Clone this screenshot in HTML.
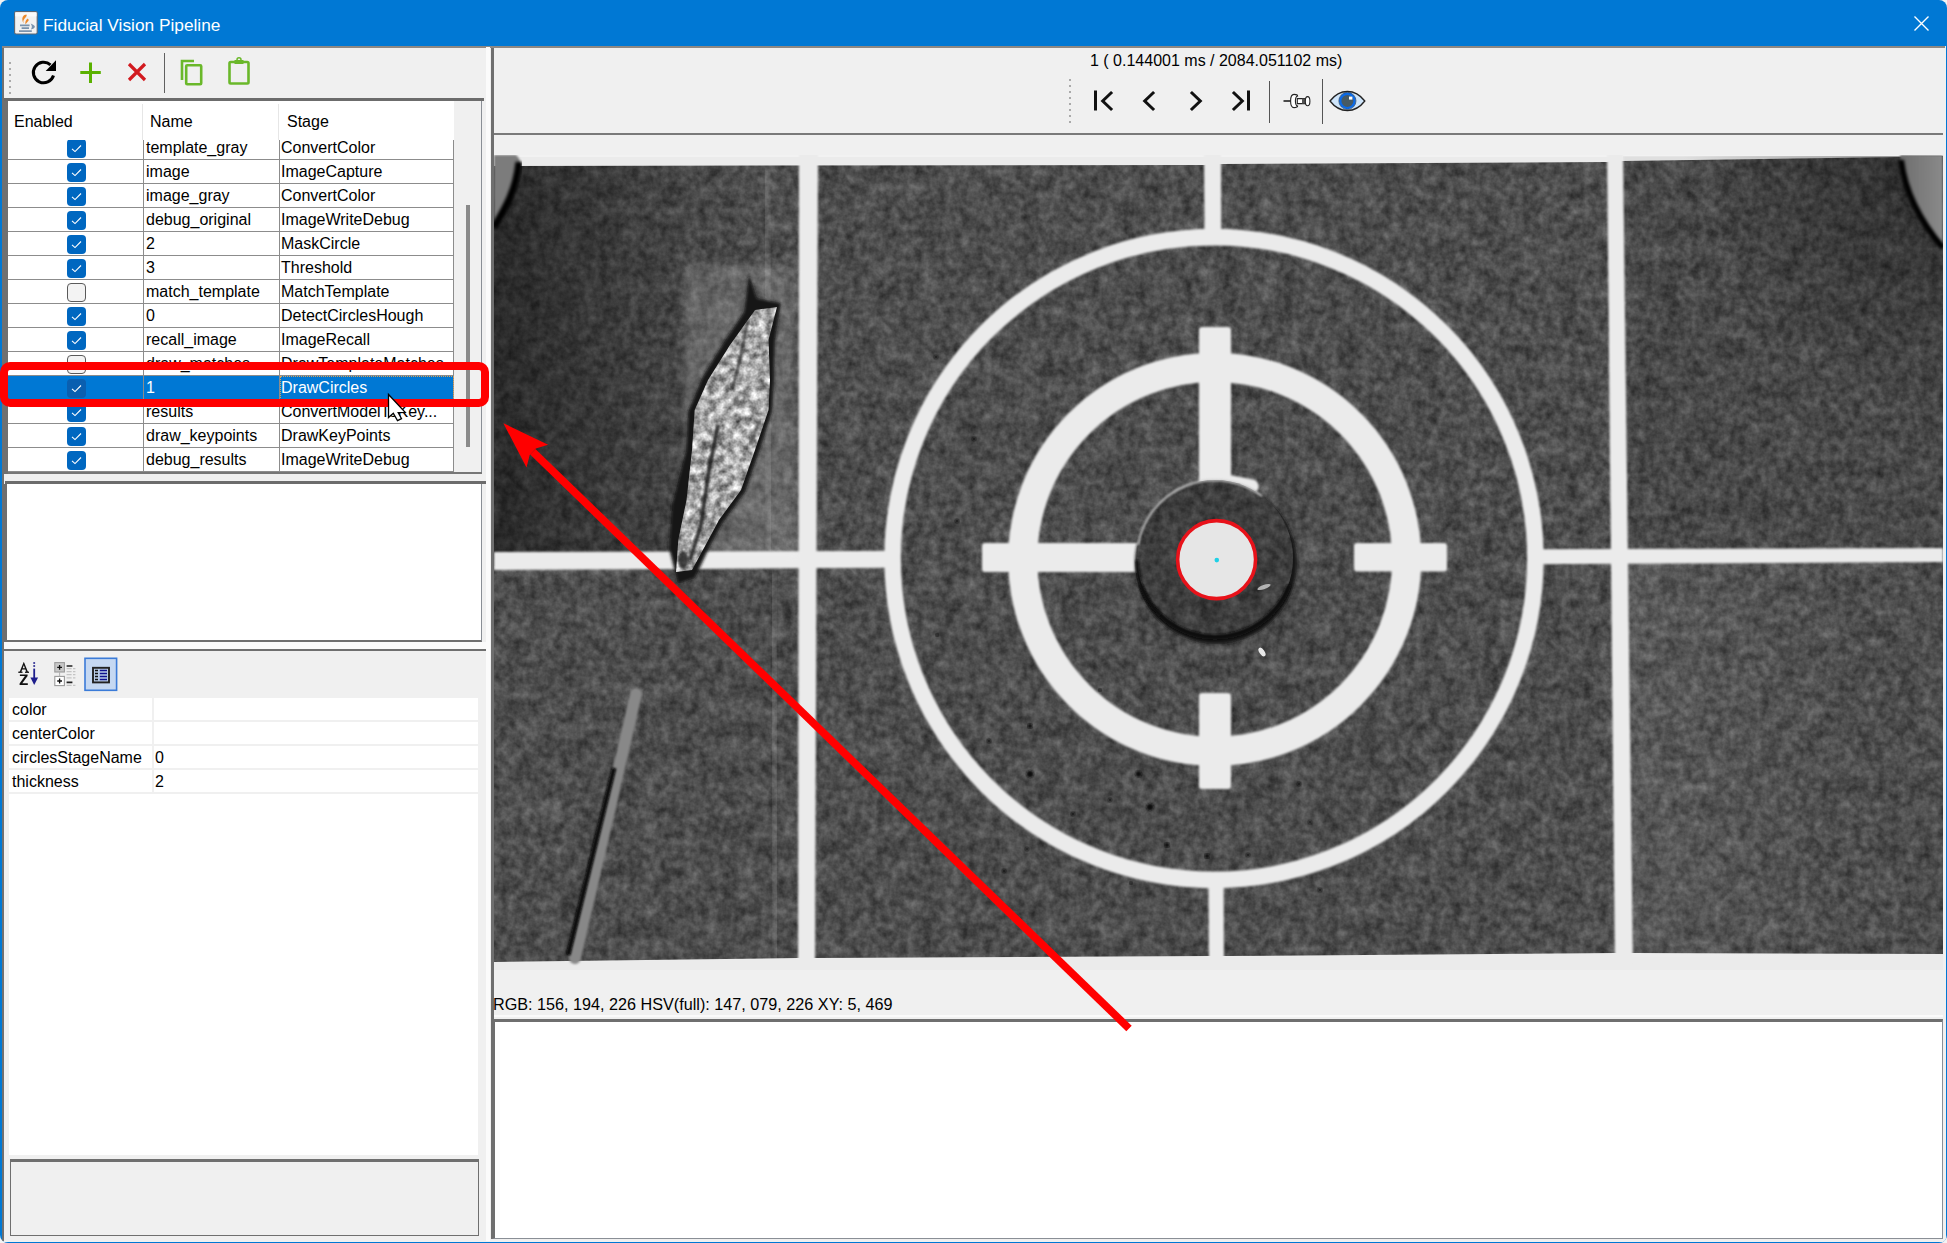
<!DOCTYPE html>
<html><head><meta charset="utf-8">
<style>
*{margin:0;padding:0;box-sizing:border-box}
html,body{width:1947px;height:1243px;overflow:hidden;background:#f3f3f3;font-family:"Liberation Sans",sans-serif}
.a{position:absolute}
#win{position:absolute;left:0;top:0;width:1947px;height:1243px;background:#0078d4;border-radius:8px 8px 8px 8px;overflow:hidden}
#title{position:absolute;left:43px;top:15px;color:#fff;font-size:17.3px;letter-spacing:0px}
.t{position:absolute;font-size:16px;color:#000;white-space:nowrap;line-height:20px}
.row{position:absolute;left:8px;width:446px;height:24px;border-bottom:1px solid #8a8a8a;background:#fff}
.cb{position:absolute;left:67px;width:19px;height:19px;border-radius:4px;background:#0067c0}
.cbo{position:absolute;left:67px;width:19px;height:19px;border-radius:4px;background:#f4f4f4;border:1px solid #555}
.vl{position:absolute;width:1px;background:#8a8a8a}
.prow{position:absolute;left:9px;width:469px;height:24px;background:#fff;border-bottom:2px solid #f0f0f0}
</style></head><body>
<div id="win">
  <!-- title bar -->
  <svg class="a" style="left:10px;top:8px" width="32" height="30" viewBox="10 8 32 30">
    <rect x="14.6" y="11.6" width="22.6" height="22.4" rx="1.5" fill="#f2f2f2" stroke="#5f6670" stroke-width="1.1"/>
    <rect x="15.3" y="12.3" width="21.2" height="4" fill="#fafafa"/>
    <path d="M24.5 15C21.5 17 22 20 23.5 23.5C22.8 20.5 24 19 25.5 17.5C26.5 16.5 27 15.5 26.5 14.5Z" fill="#ec8a2c"/>
    <path d="M27.8 18.5C25.5 20 25 22 25.5 24.5C26.5 22.5 28.5 21.5 28.8 20Z" fill="#ec8a2c"/>
    <path d="M20 25.4H29.6M21.6 28.1H29M19 31.2H31.8" stroke="#7a93ad" stroke-width="1.7"/>
    <path d="M30.7 23.6Q35.5 25.6 34.8 27.3Q33.8 29 30.8 29.4Q33 27 30.7 23.6Z" fill="#7a93ad"/>
  </svg>
  <div id="title">Fiducial Vision Pipeline</div>
  <svg class="a" style="left:1913px;top:15px" width="17" height="17" viewBox="0 0 17 17"><path d="M1.5 1.5L15.5 15.5M15.5 1.5L1.5 15.5" stroke="#fff" stroke-width="1.4"/></svg>

  <!-- client -->
  <div class="a" style="left:2px;top:46px;width:1944px;height:1195.5px;background:#f0f0f0"></div>
  <div class="a" style="left:2px;top:46px;width:1943px;height:2px;background:#8d8884"></div>

  <!-- ===== LEFT PANEL ===== -->
  <div class="a" style="left:2px;top:48px;width:2px;height:1193px;background:#707070"></div>
  <!-- toolbar -->
  <div class="a" style="left:4px;top:48px;width:484px;height:50px;background:#f0f0f0"></div>
  <div class="a" style="left:9px;top:62px;width:2px;height:36px;background:repeating-linear-gradient(#aaa 0 2px,transparent 2px 6px)"></div>
  <svg class="a" style="left:28px;top:56px" width="32" height="32" viewBox="0 0 32 32">
    <path d="M25.5 19.5A10.3 10.3 0 1 1 22.5 8.8" stroke="#000" stroke-width="3" fill="none"/>
    <path d="M28 4.3L28 15L17.7 15Z" fill="#000"/>
  </svg>
  <svg class="a" style="left:78px;top:60px" width="26" height="26" viewBox="0 0 26 26">
    <path d="M12.5 2.5V23M2.3 12.5H22.8" stroke="#5ab100" stroke-width="3"/>
  </svg>
  <svg class="a" style="left:126px;top:61px" width="22" height="22" viewBox="0 0 22 22">
    <path d="M3 3L19 19M19 3L3 19" stroke="#d21a1f" stroke-width="3.2"/>
  </svg>
  <div class="a" style="left:164px;top:53px;width:1px;height:40px;background:#606060"></div>
  <svg class="a" style="left:178px;top:57px" width="28" height="30" viewBox="0 0 28 30">
    <path d="M4 23V4H16" stroke="#6ab82a" stroke-width="2.6" fill="none"/>
    <rect x="8.2" y="8.2" width="15" height="19" rx="1" stroke="#6ab82a" stroke-width="2.6" fill="none"/>
  </svg>
  <svg class="a" style="left:226px;top:56px" width="26" height="30" viewBox="0 0 26 30">
    <rect x="3.5" y="6" width="19" height="21.5" rx="1.2" stroke="#6ab82a" stroke-width="2.6" fill="none"/>
    <rect x="8.5" y="4" width="9" height="4" fill="#6ab82a"/>
    <circle cx="13" cy="3.8" r="2" stroke="#6ab82a" stroke-width="1.5" fill="none"/>
  </svg>
  <div class="a" style="left:4px;top:98px;width:480px;height:3px;background:#6c6c6c"></div>

  <!-- table area -->
  <div class="a" style="left:4px;top:101px;width:478px;height:373px;background:#f0f0f0;border-left:4px solid #707070"></div>
  <div class="a" style="left:8px;top:101px;width:446px;height:39px;background:#fff"></div>
  <div class="a" style="left:142px;top:104px;width:1px;height:36px;background:#e6e6e6"></div>
  <div class="a" style="left:278px;top:104px;width:1px;height:36px;background:#e6e6e6"></div>
  <div class="t" style="left:14px;top:112px">Enabled</div>
  <div class="t" style="left:150px;top:112px">Name</div>
  <div class="t" style="left:287px;top:112px">Stage</div>
  <div class="a" style="left:8px;top:140px;width:446px;height:333px;overflow:hidden">
<div class="a" style="left:0;top:-4px;width:446px;height:24px;background:#fff"></div>
<div class="a" style="left:0;top:19px;width:446px;height:1px;background:#8c8c8c"></div>
<div class="a" style="left:59px;top:-1px;width:19px;height:19px;border-radius:4px;background:#0067c0"></div>
<svg class="a" style="left:59px;top:-1px" width="19" height="19" viewBox="0 0 19 19"><path d="M5 9.8L8 12.6L14 6.5" stroke="#fff" stroke-width="1.1" fill="none"/></svg>
<div class="t" style="left:138px;top:-2px;color:#000">template_gray</div>
<div class="t" style="left:273px;top:-2px;color:#000">ConvertColor</div>
<div class="a" style="left:0;top:20px;width:446px;height:24px;background:#fff"></div>
<div class="a" style="left:0;top:43px;width:446px;height:1px;background:#8c8c8c"></div>
<div class="a" style="left:59px;top:23px;width:19px;height:19px;border-radius:4px;background:#0067c0"></div>
<svg class="a" style="left:59px;top:23px" width="19" height="19" viewBox="0 0 19 19"><path d="M5 9.8L8 12.6L14 6.5" stroke="#fff" stroke-width="1.1" fill="none"/></svg>
<div class="t" style="left:138px;top:22px;color:#000">image</div>
<div class="t" style="left:273px;top:22px;color:#000">ImageCapture</div>
<div class="a" style="left:0;top:44px;width:446px;height:24px;background:#fff"></div>
<div class="a" style="left:0;top:67px;width:446px;height:1px;background:#8c8c8c"></div>
<div class="a" style="left:59px;top:47px;width:19px;height:19px;border-radius:4px;background:#0067c0"></div>
<svg class="a" style="left:59px;top:47px" width="19" height="19" viewBox="0 0 19 19"><path d="M5 9.8L8 12.6L14 6.5" stroke="#fff" stroke-width="1.1" fill="none"/></svg>
<div class="t" style="left:138px;top:46px;color:#000">image_gray</div>
<div class="t" style="left:273px;top:46px;color:#000">ConvertColor</div>
<div class="a" style="left:0;top:68px;width:446px;height:24px;background:#fff"></div>
<div class="a" style="left:0;top:91px;width:446px;height:1px;background:#8c8c8c"></div>
<div class="a" style="left:59px;top:71px;width:19px;height:19px;border-radius:4px;background:#0067c0"></div>
<svg class="a" style="left:59px;top:71px" width="19" height="19" viewBox="0 0 19 19"><path d="M5 9.8L8 12.6L14 6.5" stroke="#fff" stroke-width="1.1" fill="none"/></svg>
<div class="t" style="left:138px;top:70px;color:#000">debug_original</div>
<div class="t" style="left:273px;top:70px;color:#000">ImageWriteDebug</div>
<div class="a" style="left:0;top:92px;width:446px;height:24px;background:#fff"></div>
<div class="a" style="left:0;top:115px;width:446px;height:1px;background:#8c8c8c"></div>
<div class="a" style="left:59px;top:95px;width:19px;height:19px;border-radius:4px;background:#0067c0"></div>
<svg class="a" style="left:59px;top:95px" width="19" height="19" viewBox="0 0 19 19"><path d="M5 9.8L8 12.6L14 6.5" stroke="#fff" stroke-width="1.1" fill="none"/></svg>
<div class="t" style="left:138px;top:94px;color:#000">2</div>
<div class="t" style="left:273px;top:94px;color:#000">MaskCircle</div>
<div class="a" style="left:0;top:116px;width:446px;height:24px;background:#fff"></div>
<div class="a" style="left:0;top:139px;width:446px;height:1px;background:#8c8c8c"></div>
<div class="a" style="left:59px;top:119px;width:19px;height:19px;border-radius:4px;background:#0067c0"></div>
<svg class="a" style="left:59px;top:119px" width="19" height="19" viewBox="0 0 19 19"><path d="M5 9.8L8 12.6L14 6.5" stroke="#fff" stroke-width="1.1" fill="none"/></svg>
<div class="t" style="left:138px;top:118px;color:#000">3</div>
<div class="t" style="left:273px;top:118px;color:#000">Threshold</div>
<div class="a" style="left:0;top:140px;width:446px;height:24px;background:#fff"></div>
<div class="a" style="left:0;top:163px;width:446px;height:1px;background:#8c8c8c"></div>
<div class="a" style="left:59px;top:143px;width:19px;height:19px;border-radius:4px;background:#f3f3f3;border:1px solid #5a5a5a"></div>
<div class="t" style="left:138px;top:142px;color:#000">match_template</div>
<div class="t" style="left:273px;top:142px;color:#000">MatchTemplate</div>
<div class="a" style="left:0;top:164px;width:446px;height:24px;background:#fff"></div>
<div class="a" style="left:0;top:187px;width:446px;height:1px;background:#8c8c8c"></div>
<div class="a" style="left:59px;top:167px;width:19px;height:19px;border-radius:4px;background:#0067c0"></div>
<svg class="a" style="left:59px;top:167px" width="19" height="19" viewBox="0 0 19 19"><path d="M5 9.8L8 12.6L14 6.5" stroke="#fff" stroke-width="1.1" fill="none"/></svg>
<div class="t" style="left:138px;top:166px;color:#000">0</div>
<div class="t" style="left:273px;top:166px;color:#000">DetectCirclesHough</div>
<div class="a" style="left:0;top:188px;width:446px;height:24px;background:#fff"></div>
<div class="a" style="left:0;top:211px;width:446px;height:1px;background:#8c8c8c"></div>
<div class="a" style="left:59px;top:191px;width:19px;height:19px;border-radius:4px;background:#0067c0"></div>
<svg class="a" style="left:59px;top:191px" width="19" height="19" viewBox="0 0 19 19"><path d="M5 9.8L8 12.6L14 6.5" stroke="#fff" stroke-width="1.1" fill="none"/></svg>
<div class="t" style="left:138px;top:190px;color:#000">recall_image</div>
<div class="t" style="left:273px;top:190px;color:#000">ImageRecall</div>
<div class="a" style="left:0;top:212px;width:446px;height:24px;background:#fff"></div>
<div class="a" style="left:0;top:235px;width:446px;height:1px;background:#8c8c8c"></div>
<div class="a" style="left:59px;top:215px;width:19px;height:19px;border-radius:4px;background:#f3f3f3;border:1px solid #5a5a5a"></div>
<div class="t" style="left:138px;top:214px;color:#000">draw_matches</div>
<div class="t" style="left:273px;top:214px;color:#000">DrawTemplateMatches</div>
<div class="a" style="left:0;top:236px;width:446px;height:24px;background:#0078d4"></div>
<div class="a" style="left:0;top:259px;width:446px;height:1px;background:#8c8c8c"></div>
<div class="a" style="left:59px;top:239px;width:19px;height:19px;border-radius:4px;background:#0a5fb0"></div>
<svg class="a" style="left:59px;top:239px" width="19" height="19" viewBox="0 0 19 19"><path d="M5 9.8L8 12.6L14 6.5" stroke="#fff" stroke-width="1.1" fill="none"/></svg>
<div class="t" style="left:138px;top:238px;color:#fff">1</div>
<div class="t" style="left:273px;top:238px;color:#fff">DrawCircles</div>
<div class="a" style="left:0;top:260px;width:446px;height:24px;background:#fff"></div>
<div class="a" style="left:0;top:283px;width:446px;height:1px;background:#8c8c8c"></div>
<div class="a" style="left:59px;top:263px;width:19px;height:19px;border-radius:4px;background:#0067c0"></div>
<svg class="a" style="left:59px;top:263px" width="19" height="19" viewBox="0 0 19 19"><path d="M5 9.8L8 12.6L14 6.5" stroke="#fff" stroke-width="1.1" fill="none"/></svg>
<div class="t" style="left:138px;top:262px;color:#000">results</div>
<div class="t" style="left:273px;top:262px;color:#000">ConvertModelToKey...</div>
<div class="a" style="left:0;top:284px;width:446px;height:24px;background:#fff"></div>
<div class="a" style="left:0;top:307px;width:446px;height:1px;background:#8c8c8c"></div>
<div class="a" style="left:59px;top:287px;width:19px;height:19px;border-radius:4px;background:#0067c0"></div>
<svg class="a" style="left:59px;top:287px" width="19" height="19" viewBox="0 0 19 19"><path d="M5 9.8L8 12.6L14 6.5" stroke="#fff" stroke-width="1.1" fill="none"/></svg>
<div class="t" style="left:138px;top:286px;color:#000">draw_keypoints</div>
<div class="t" style="left:273px;top:286px;color:#000">DrawKeyPoints</div>
<div class="a" style="left:0;top:308px;width:446px;height:24px;background:#fff"></div>
<div class="a" style="left:0;top:331px;width:446px;height:1px;background:#8c8c8c"></div>
<div class="a" style="left:59px;top:311px;width:19px;height:19px;border-radius:4px;background:#0067c0"></div>
<svg class="a" style="left:59px;top:311px" width="19" height="19" viewBox="0 0 19 19"><path d="M5 9.8L8 12.6L14 6.5" stroke="#fff" stroke-width="1.1" fill="none"/></svg>
<div class="t" style="left:138px;top:310px;color:#000">debug_results</div>
<div class="t" style="left:273px;top:310px;color:#000">ImageWriteDebug</div>
<div class="a" style="left:135px;top:0;width:1px;height:333px;background:#8c8c8c"></div>
<div class="a" style="left:271px;top:0;width:1px;height:333px;background:#8c8c8c"></div>
<div class="a" style="left:445px;top:0;width:1.5px;height:333px;background:#8c8c8c"></div>
</div>
  <div class="a" style="left:481px;top:101px;width:1px;height:373px;background:#8a8f96"></div>
  <div class="a" style="left:8px;top:472px;width:474px;height:2px;background:#777"></div>
  <div class="a" style="left:466px;top:205px;width:4px;height:242px;background:#8a8a8a"></div>

  <!-- blank white box -->
  <div class="a" style="left:5px;top:481px;width:481px;height:2.5px;background:#6c6c6c"></div>
  <div class="a" style="left:3px;top:483.5px;width:479px;height:158.5px;background:#fff;border-left:4.5px solid #6f6f6f;border-bottom:2px solid #6f6f6f;border-right:1px solid #8a8f96"></div>
  <div class="a" style="left:4px;top:642px;width:482px;height:7px;background:#fafafa"></div>

  <!-- properties panel -->
  <div class="a" style="left:3px;top:649px;width:483px;height:2px;background:#6f6f6f"></div>
  <svg class="a" style="left:8px;top:650px" width="120" height="50" viewBox="8 650 120 50">
    <g fill="#111">
      <path d="M23.7 662L19.6 672H21.3L22.2 669.6H25.4L26.3 672H28L23.9 662ZM22.7 668.3L23.8 665.2L24.9 668.3Z"/>
      <rect x="18.3" y="671.6" width="4.2" height="1.3"/><rect x="25" y="671.6" width="4" height="1.3"/>
      <path d="M19.9 674.4H27.6V675.9L22.3 683.3H27.8V684.9H19.6V683.4L24.9 676H19.9Z"/>
    </g>
    <g fill="#1e1e8c">
      <rect x="33.3" y="662.2" width="1.8" height="1.6"/><rect x="33.3" y="665.2" width="1.8" height="1.6"/>
      <rect x="33.3" y="668.6" width="1.8" height="9.5"/>
      <path d="M30.4 677.5H38.1L34.2 685Z"/>
    </g>
    <rect x="54.8" y="662.6" width="9.6" height="9.4" fill="#c8c8c8" stroke="#9a9a9a" stroke-width="1.1"/>
    <rect x="54.8" y="676.4" width="9.6" height="9.2" fill="#fff" stroke="#9a9a9a" stroke-width="1.1"/>
    <path d="M59.6 672V676.4" stroke="#b0b0b0"/>
    <path d="M57.2 667.3H62M59.6 664.9V669.7M57.2 681H62M59.6 678.6V683.4" stroke="#111" stroke-width="1.3"/>
    <path d="M66.6 666H72.4M66.6 682.4H72.4" stroke="#222" stroke-width="1.6"/>
    <path d="M66.6 668.6H71.6M73 668.6H75.4M66.6 671.6H71.6M73 671.6H75.4M66.6 674.7H71.6M73 674.7H75.4M66.6 677.8H71.6M73 677.8H75.4M66.6 685.4H71.6M73 685.4H75.4" stroke="#c4c4c4" stroke-width="1.2"/>
    <rect x="85" y="658.3" width="31.6" height="32" fill="#c5d8f2" stroke="#3b7bd8" stroke-width="1.6"/>
    <rect x="93" y="667.8" width="16" height="14.6" fill="#b9cde8" stroke="#222" stroke-width="1.9"/>
    <path d="M95 670.5H98M95 673.5H98M95 676.5H98M95 679.5H98" stroke="#111" stroke-width="1.3"/>
    <path d="M99.8 670.5H107M99.8 673.5H107M99.8 676.5H107M99.8 679.5H107" stroke="#10108e" stroke-width="1.3"/>
  </svg>
  <div class="a" style="left:9px;top:698px;width:469px;height:22px;background:#fff"></div>
<div class="a" style="left:152px;top:698px;width:2px;height:22px;background:#f0f0f0"></div>
<div class="t" style="left:12px;top:699.5px">color</div>
<div class="a" style="left:9px;top:722px;width:469px;height:22px;background:#fff"></div>
<div class="a" style="left:152px;top:722px;width:2px;height:22px;background:#f0f0f0"></div>
<div class="t" style="left:12px;top:723.5px">centerColor</div>
<div class="a" style="left:9px;top:746px;width:469px;height:22px;background:#fff"></div>
<div class="a" style="left:152px;top:746px;width:2px;height:22px;background:#f0f0f0"></div>
<div class="t" style="left:12px;top:747.5px">circlesStageName</div>
<div class="t" style="left:155px;top:747.5px">0</div>
<div class="a" style="left:9px;top:770px;width:469px;height:22px;background:#fff"></div>
<div class="a" style="left:152px;top:770px;width:2px;height:22px;background:#f0f0f0"></div>
<div class="t" style="left:12px;top:771.5px">thickness</div>
<div class="t" style="left:155px;top:771.5px">2</div>
  <div class="a" style="left:9px;top:794px;width:469px;height:361px;background:#fff"></div>

  <!-- bottom box -->
  <div class="a" style="left:10px;top:1159px;width:469px;height:77px;background:#f0f0f0;border:1px solid #6f6f6f;border-top:3px solid #6f6f6f"></div>

  <!-- splitter / right panel borders -->
  <div class="a" style="left:486px;top:47px;width:4px;height:1194px;background:#fbfbfb"></div>
  <div class="a" style="left:491px;top:48px;width:3px;height:1191px;background:#6f6f6f"></div>

  <!-- ===== RIGHT PANEL ===== -->
  <div class="t" style="left:1090px;top:50.5px">1 ( 0.144001 ms / 2084.051102 ms)</div>
  <div class="a" style="left:1069px;top:79px;width:2px;height:44px;background:repeating-linear-gradient(#aaa 0 2px,transparent 2px 6px)"></div>
  <svg class="a" style="left:1090px;top:88px" width="170" height="26" viewBox="0 0 170 26">
    <g stroke="#111" stroke-width="3" fill="none" stroke-linecap="square">
      <path d="M5.5 4V21"/>
      <path d="M21 5L12.7 13L21 21"/>
      <path d="M63 5L54.7 13L63 21"/>
      <path d="M102 5L110.3 13L102 21"/>
      <path d="M144 5L152.3 13L144 21"/>
      <path d="M158.5 4V21"/>
    </g>
  </svg>
  <div class="a" style="left:1269px;top:81px;width:1px;height:42px;background:#555"></div>
  <svg class="a" style="left:1275px;top:78px" width="100" height="47" viewBox="1275 78 100 47">
    <path d="M1283.5 101H1291" stroke="#222" stroke-width="1.6"/>
    <path d="M1297.3 98.6H1305.6V103.6H1297.3Z" fill="#fff" stroke="#222" stroke-width="1.1"/>
    <path d="M1302 98.6H1305.6V103.6H1302Z" fill="#555"/>
    <ellipse cx="1307.6" cy="101.2" rx="2.3" ry="4.6" fill="#fff" stroke="#222" stroke-width="1.1"/>
    <path d="M1294 94.4C1291.2 94.4 1290.6 97.5 1290.6 101C1290.6 104.5 1291.2 107.6 1294 107.6C1296.4 107.6 1297.6 106.4 1297.6 106C1295.8 105.6 1295.4 103.6 1295.4 101C1295.4 98.4 1295.8 96.4 1297.6 96C1297.6 95.6 1296.4 94.4 1294 94.4Z" fill="#fff" stroke="#222" stroke-width="1.1"/>
    <path d="M1330 101C1335 94.5 1341 91.5 1347.4 91.5C1353.8 91.5 1359.8 94.5 1364.8 101C1359.8 107.5 1353.8 110.5 1347.4 110.5C1341 110.5 1335 107.5 1330 101Z" fill="#cfe5fa" stroke="#222" stroke-width="1.3"/>
    <circle cx="1347.4" cy="100.9" r="7.2" fill="#465a64" stroke="#0a6ae8" stroke-width="2.4"/>
    <circle cx="1347.4" cy="100.9" r="8.6" fill="none" stroke="#1a2a3a" stroke-width="0.8" opacity="0.7"/>
    <rect x="1349" y="96.6" width="3.4" height="3" fill="#fff"/>
  </svg>
  <div class="a" style="left:1322px;top:79px;width:1px;height:45px;background:#555"></div>
  <div class="a" style="left:494px;top:133px;width:1449px;height:2px;background:#7a7a7a"></div>

  <!-- image -->
  <svg class="a" style="left:494px;top:155px" width="1449" height="815" viewBox="494 155 1449 815">
<defs>
<filter id="nz" x="494" y="155" width="1449" height="815" filterUnits="userSpaceOnUse" color-interpolation-filters="sRGB">
  <feTurbulence type="fractalNoise" baseFrequency="0.13" numOctaves="3" seed="3" result="t1"/>
  <feColorMatrix in="t1" type="matrix" values="1 0 0 0 0  1 0 0 0 0  1 0 0 0 0  0 0 0 0 1" result="g1"/>
  <feTurbulence type="fractalNoise" baseFrequency="0.05" numOctaves="2" seed="11" result="t2"/>
  <feColorMatrix in="t2" type="matrix" values="1 0 0 0 0  1 0 0 0 0  1 0 0 0 0  0 0 0 0 1" result="g2"/>
  <feComposite in="g1" in2="g2" operator="arithmetic" k1="0" k2="0.27" k3="0.17" k4="0.085" result="g0"/>
  <feColorMatrix in="g0" type="matrix" values="0.525 0 0 0 0  0.525 0 0 0 0  0.525 0 0 0 0  0 0 0 0 1" result="g"/>
  <feGaussianBlur in="g" stdDeviation="0.5" result="gb"/>
  <feComposite in="gb" in2="SourceAlpha" operator="in"/>
</filter>
<filter id="nzl" x="640" y="250" width="170" height="350" filterUnits="userSpaceOnUse" color-interpolation-filters="sRGB">
  <feTurbulence type="fractalNoise" baseFrequency="0.12" numOctaves="3" seed="5" result="t1"/>
  <feColorMatrix in="t1" type="matrix" values="1.0 0 0 0 0.16  1.0 0 0 0 0.16  1.0 0 0 0 0.16  0 0 0 0 1" result="g1"/>
  <feComposite in="g1" in2="SourceAlpha" operator="in"/>
  <feGaussianBlur stdDeviation="0.7"/>
</filter>
<filter id="bl1"><feGaussianBlur stdDeviation="0.8"/></filter>
<filter id="bl2"><feGaussianBlur stdDeviation="1.6"/></filter>
<filter id="bl3"><feGaussianBlur stdDeviation="3"/></filter>
<filter id="bl8" x="-50%" y="-50%" width="200%" height="200%"><feGaussianBlur stdDeviation="25"/></filter>
<linearGradient id="vigL" x1="0" y1="0" x2="1" y2="0">
  <stop offset="0" stop-color="#000" stop-opacity="0.35"/>
  <stop offset="1" stop-color="#000" stop-opacity="0"/>
</linearGradient>
</defs>
<rect x="494" y="155" width="1449" height="815" fill="#ebebeb"/>
<rect x="494" y="155" width="1449" height="2" fill="#f2f2f2"/>
<g filter="url(#nz)">
<polygon points="494,166 1204,165 1221,164 1607,162 1623,161 1900,157 1943,156 1943,954 1633,953 1615,953 1224,956 1209,956 815,958 798,958 494,962" fill="#000"/>
</g>
<rect x="494" y="166" width="260" height="400" fill="url(#vigL)"/>
<rect x="494" y="166" width="200" height="386" fill="url(#vigL)" opacity="0.5"/>
<defs><linearGradient id="ltR" x1="0" y1="0" x2="1" y2="0"><stop offset="0" stop-color="#fff" stop-opacity="0.07"/><stop offset="1" stop-color="#fff" stop-opacity="0"/></linearGradient></defs>
<rect x="1625" y="562" width="240" height="395" fill="url(#ltR)"/>
<rect x="1623" y="156" width="320" height="394" fill="#000" opacity="0.05"/>
<defs><radialGradient id="vigTR" cx="1943" cy="156" r="260" gradientUnits="userSpaceOnUse"><stop offset="0" stop-color="#000" stop-opacity="0.4"/><stop offset="1" stop-color="#000" stop-opacity="0"/></radialGradient></defs>
<rect x="1623" y="156" width="320" height="394" fill="url(#vigTR)"/>
<rect x="685" y="268" width="105" height="290" fill="#fff" opacity="0.06" filter="url(#bl3)"/>
<path d="M766 170 L770 552" stroke="#fff" stroke-width="7" opacity="0.10" filter="url(#bl2)"/>
<g filter="url(#bl1)"><polygon points="799,150 818,150 815,975 798,975" fill="#ebebeb"/><polygon points="1204,150 1221,150 1224,975 1209,975" fill="#ebebeb"/><polygon points="1607,150 1623,150 1633,975 1615,975" fill="#ebebeb"/><polygon points="494,552 1943,548 1943,562 494,570" fill="#ebebeb"/></g>
<g filter="url(#nz)">
<circle cx="1214" cy="558.5" r="322" fill="#000"/>
</g>
<g filter="url(#bl1)"><circle cx="1214" cy="558.5" r="321.4" fill="none" stroke="#ebebeb" stroke-width="16.6"/><circle cx="1214.7" cy="559.3" r="192" fill="none" stroke="#ebebeb" stroke-width="29.3"/><rect x="1199" y="327" width="32" height="170" rx="3" fill="#ebebeb"/><path d="M1225 474 L1255 480 Q1262 486 1256 492 L1225 492Z" fill="#ebebeb"/><rect x="982" y="543" width="170" height="29" rx="3" fill="#ebebeb"/><rect x="1354" y="543" width="93" height="28.5" rx="3" fill="#ebebeb"/><rect x="1199" y="693" width="32" height="96" rx="3" fill="#ebebeb"/></g>
<circle cx="1216" cy="563" r="81" fill="#151515" filter="url(#bl2)"/>
<g filter="url(#nz)">
<circle cx="1215" cy="558" r="78" fill="#000"/>
</g>
<circle cx="1215" cy="558" r="78" fill="#000" opacity="0.2"/>
<path d="M1138 545 A78 78 0 0 1 1262 496" fill="none" stroke="#d0d0d0" stroke-width="2.2" opacity="0.85" filter="url(#bl1)"/>
<path d="M1140.8 585 A79 79 0 0 0 1289.2 585" fill="none" stroke="#111" stroke-width="5" opacity="0.95" filter="url(#bl1)"/>
<path d="M1137 560 A79 79 0 0 0 1160 615" fill="none" stroke="#111" stroke-width="3" opacity="0.9" filter="url(#bl1)"/>
<circle cx="1216.6" cy="559.6" r="39" fill="#e6e6e6" stroke="#e8121a" stroke-width="3.6"/>
<circle cx="1216.8" cy="560.1" r="2.3" fill="#1fd0e6"/>
<ellipse cx="1262" cy="652" rx="2.5" ry="5" transform="rotate(-35 1262 652)" fill="#e8e8e8"/>
<ellipse cx="1264" cy="587" rx="7" ry="2" transform="rotate(-20 1264 587)" fill="#cfcfcf" opacity="0.8"/>
<circle cx="1030" cy="774" r="3.5" fill="#111" filter="url(#bl1)"/>
<circle cx="1138.5" cy="774" r="3" fill="#111" filter="url(#bl1)"/>
<circle cx="1150" cy="807" r="3.5" fill="#111" filter="url(#bl1)"/>
<circle cx="1073" cy="814" r="2" fill="#111" filter="url(#bl1)"/>
<circle cx="1110" cy="800" r="2" fill="#111" filter="url(#bl1)"/>
<circle cx="1167" cy="845" r="2.5" fill="#111" filter="url(#bl1)"/>
<circle cx="1207" cy="856" r="2.5" fill="#111" filter="url(#bl1)"/>
<circle cx="1030" cy="726" r="2.5" fill="#111" filter="url(#bl1)"/>
<circle cx="989" cy="741" r="2" fill="#111" filter="url(#bl1)"/>
<circle cx="1004" cy="871" r="2" fill="#111" filter="url(#bl1)"/>
<circle cx="1027" cy="849" r="1.8" fill="#111" filter="url(#bl1)"/>
<circle cx="937" cy="635" r="1.5" fill="#111" filter="url(#bl1)"/>
<circle cx="1131" cy="883" r="1.5" fill="#111" filter="url(#bl1)"/>
<circle cx="974" cy="439" r="2" fill="#111" filter="url(#bl1)"/>
<circle cx="957" cy="521" r="2" fill="#111" filter="url(#bl1)"/>
<circle cx="1299" cy="784" r="2" fill="#111" filter="url(#bl1)"/>
<circle cx="1248" cy="855" r="2" fill="#111" filter="url(#bl1)"/>
<circle cx="936" cy="357" r="2" fill="#111" filter="url(#bl1)"/>
<circle cx="1310" cy="822" r="1.8" fill="#111" filter="url(#bl1)"/>
<circle cx="1100" cy="690" r="1.5" fill="#111" filter="url(#bl1)"/>
<circle cx="1320" cy="890" r="2" fill="#111" filter="url(#bl1)"/>
<rect x="684" y="266" width="114" height="292" rx="6" fill="#fff" opacity="0.10" filter="url(#bl3)"/>
<polygon points="749,274 757,298 781,303 775,340 774,380 772,412 759,452 745,492 722,524 709,548 695,578 678,584 669,548 672,505 686,450 688,412 702,378 724,342 744,312" fill="#121212" filter="url(#bl2)"/>
<g filter="url(#nzl)"><polygon points="755,310 777,307 768.5,340 770,380 768.5,410 755,450 741,490 719,520 705.6,545 692,570 676,572 678.3,540 686.5,500 692,450 694.7,410 708,380 730,345" fill="#000"/></g>
<path d="M718 425 L709 470 L701 525 L690 560" stroke="#1c1c1c" stroke-width="4" fill="none" opacity="0.85" filter="url(#bl1)"/>
<path d="M748 320 L740 360 L732 390" stroke="#2a2a2a" stroke-width="3" fill="none" opacity="0.75" filter="url(#bl1)"/>
<path d="M760 420 L750 445" stroke="#2a2a2a" stroke-width="3" fill="none" opacity="0.6" filter="url(#bl1)"/>
<ellipse cx="683" cy="560" rx="5" ry="9" fill="#1a1a1a" opacity="0.8" filter="url(#bl1)"/>
<path d="M636 694 L575 958" stroke="#888" stroke-width="12" stroke-linecap="round" filter="url(#bl1)"/>
<path d="M614 768 L568 955" stroke="#070707" stroke-width="5" filter="url(#bl1)"/>
<path d="M773 572 L776 958" stroke="#fff" stroke-width="6" opacity="0.12" filter="url(#bl2)"/>
<ellipse cx="552" cy="815" rx="9" ry="14" fill="#fff" opacity="0.08" filter="url(#bl3)"/>
<defs><linearGradient id="fxR" x1="0" y1="0" x2="1" y2="0"><stop offset="0" stop-color="#6e6e6e"/><stop offset="1" stop-color="#8a8a8a"/></linearGradient></defs>
<path d="M494 155 L516 155 Q522 160 520 168 C 516 190, 506 207, 494 225 Z" fill="#7c7c7c" filter="url(#bl1)"/>
<path d="M519 162 C 516 190, 506 207, 494 227" stroke="#050505" stroke-width="7" fill="none" filter="url(#bl2)"/>
<path d="M1943 155 L1900 155 C 1903 185, 1915 215, 1943 246 Z" fill="url(#fxR)" filter="url(#bl1)"/>
<path d="M1901 160 C 1904 185, 1915 215, 1943 248" stroke="#050505" stroke-width="6" fill="none" filter="url(#bl2)"/>
</svg>

  <div class="t" style="left:493px;top:993.5px;font-size:16.2px">RGB: 156, 194, 226 HSV(full): 147, 079, 226 XY: 5, 469</div>
  <div class="a" style="left:494px;top:1015px;width:1449px;height:2px;background:#fafafa"></div>
  <div class="a" style="left:492px;top:1019px;width:1451px;height:220px;background:#fff;border-left:3px solid #6f6f6f;border-top:3px solid #6f6f6f;border-right:1px solid #8a8f96;border-bottom:1px solid #8a8f96"></div>

  <div class="a" style="left:280px;top:376px;width:174px;height:24px;border:1px dotted #d9a35a"></div>
  <!-- annotations -->
  <svg class="a" style="left:0;top:0" width="1947" height="1243">
    <rect x="4" y="366" width="481" height="37" rx="6" ry="6" fill="none" stroke="#f00" stroke-width="8"/>
    <path d="M532.8 451.8L1129 1028.4" stroke="#f00" stroke-width="7.7"/>
    <path d="M503.4 423.2L548.1 444.7L535.9 448.6L529.7 455L526.5 467.6Z" fill="#f00"/>
  </svg>
  <svg class="a" style="left:386px;top:392px" width="24" height="32" viewBox="386 392 24 32">
    <path d="M388.5 394.5L388.5 417.5L393.3 413.3L397.5 420.6L401.5 418.6L398.2 412.6L405.2 412.4Z" fill="#fff" stroke="#000" stroke-width="1.3" stroke-linejoin="miter"/>
  </svg>
</div>
</body></html>
